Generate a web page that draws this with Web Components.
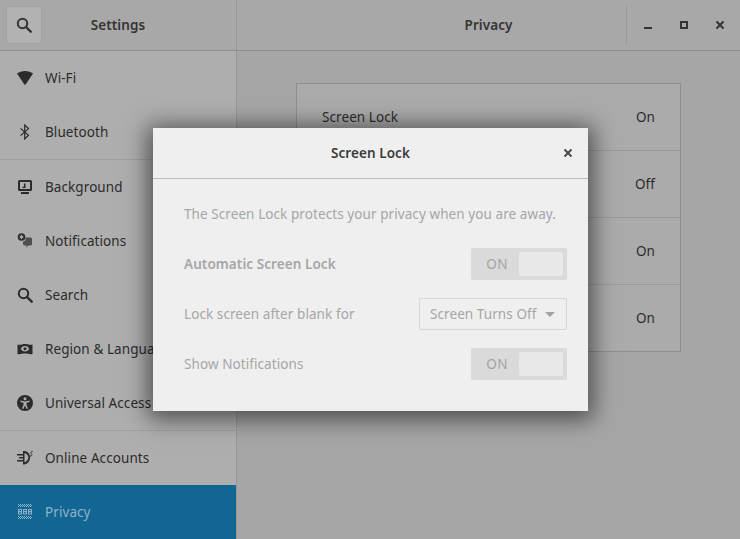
<!DOCTYPE html>
<html>
<head>
<meta charset="utf-8">
<title>Settings</title>
<style>
  html, body { margin: 0; height: 100%; overflow: hidden; }
  body { font: 13.5px "Noto Sans", "Open Sans", sans-serif; letter-spacing: .08px; color: #2e3436; }
</style>
</head>
<body>
<settings-window>
  <settings-header></settings-header>
  <settings-sidebar>
    <nav-row icon="wifi">Wi-Fi</nav-row>
    <nav-row icon="bluetooth" class="end">Bluetooth</nav-row>
    <nav-row icon="background">Background</nav-row>
    <nav-row icon="notifications">Notifications</nav-row>
    <nav-row icon="search">Search</nav-row>
    <nav-row icon="region">Region &amp; Language</nav-row>
    <nav-row icon="access" class="end">Universal Access</nav-row>
    <nav-row icon="online">Online Accounts</nav-row>
    <nav-row icon="privacy" selected>Privacy</nav-row>
  </settings-sidebar>
  <privacy-panel>
    <panel-row label="Screen Lock" value="On"></panel-row>
    <panel-row value="Off"></panel-row>
    <panel-row value="On"></panel-row>
    <panel-row value="On"></panel-row>
  </privacy-panel>
</settings-window>
<lock-dialog>
  <dialog-row><b>Automatic Screen Lock</b><lock-switch slot="control"></lock-switch></dialog-row>
  <dialog-row>Lock screen after blank for<lock-combo slot="control">Screen Turns Off</lock-combo></dialog-row>
  <dialog-row>Show Notifications<lock-switch slot="control"></lock-switch></dialog-row>
</lock-dialog>

<script>
// icons are all 16x16, drawn with the current colour
const ICONS = {
  wifi: '<path d="M0 3.600C2 1.900 5 1 8 1s6 .9 8 2.600L8.600 14.400c-.3.4-.9.4-1.200 0z" fill="currentColor"/>',
  bluetooth: '<path d="M3.500 4.400l8 6.900L7.700 15V1l3.800 3.600-8 7" fill="none" stroke="currentColor" stroke-width="1.200"/>',
  background: '<path fill-rule="evenodd" d="M2.500 1h11A1.500 1.500 0 0 1 15 2.500v8a1.500 1.500 0 0 1-1.500 1.500h-11A1.500 1.500 0 0 1 1 10.500v-8A1.500 1.500 0 0 1 2.500 1zM3 3v7h10V3zM4 13h8v2H4z" fill="currentColor"/><path d="M5 9l2-2V4.500h1.500V9z" fill="currentColor"/>',
  notifications: '<path d="M8.500 4.500h5A1.500 1.500 0 0 1 15 6v5a1.500 1.500 0 0 1-1.500 1.500H11L9.500 15V12.500h-2A2 2 0 0 1 6 11V8.500c2 0 3-2 2.500-4z" fill="currentColor" opacity=".72"/><circle cx="4.500" cy="4" r="3.800" fill="currentColor"/><path d="M4.500 1.800v4.400M2.600 2.900l3.800 2.200M6.400 2.900L2.600 5.100" stroke="#aeaeae"/>',
  search: '<circle cx="6.500" cy="6.500" r="4.700" fill="none" stroke="currentColor" stroke-width="2"/><path d="M10 10l4.700 4.700" stroke="currentColor" stroke-width="2.400" stroke-linecap="round"/>',
  region: '<path fill-rule="evenodd" d="M.5 3.500c2.500.8 4.500-.5 7.500-.5s5 1.300 7.500.5v9.500c-2.500.6-4.500-.5-7.500-.5s-5 1.100-7.500.5zM8 5c-2 0-3.500 1.300-4.200 2.700C4.500 9.200 6 10.500 8 10.500s3.500-1.300 4.200-2.800C11.500 6.300 10 5 8 5z" fill="currentColor"/><circle cx="8" cy="7.700" r="1.500" fill="currentColor"/>',
  access: '<path fill-rule="evenodd" d="M8 0a8 8 0 1 1 0 16A8 8 0 0 1 8 0zm0 2.300a1.500 1.500 0 1 0 0 3 1.500 1.500 0 0 0 0-3zM3.500 5.600v1.300l3 .8v2l-1.400 3.800 1.200.4L8 10.500l1.700 3.400 1.200-.4-1.400-3.800v-2l3-.8V5.600L8 6.500z" fill="currentColor"/>',
  online: '<path d="M6 1h1.500c3.800.6 5.500 3.400 5.500 6.500s-1.700 6.200-5.500 7H6z" fill="currentColor"/><path d="M7.500 3c2.500.6 3.800 2.500 3.800 4.500s-1.300 4-3.800 4.800z" fill="#aeaeae"/><path d="M0 4.800h6.500M0 10.700h6.500M2 7.700h4.500" stroke="currentColor" stroke-width="1.500"/><path d="M15.800 1.500c-1.800-.5-2.600 1-1.500 2.200s.6 2.800-1.300 2.300" fill="none" stroke="currentColor" stroke-width=".9"/>',
  privacy: '<g fill="none" stroke="currentColor"><path stroke-dasharray="1 1" d="M1 .5h14M2 1.500h13M1 2.500h14M1 12.500h14M2 13.500h13M1 14.500h14"/><path fill-rule="evenodd" stroke="none" fill="currentColor" d="M1 5h4v5.500H1zM2 6v1h2V6zM2 8.200v1.200h2V8.200zM6 5h4v5.500H6zM7 6v1h2V6zM7 8.200v1.200h2V8.200zM11 5h4v5.500h-4zM12 6v1h2V6zM12 8.200v1.200h2V8.200z"/></g>',
  close: '<path d="M4.500 4.500l7 7M11.500 4.500l-7 7" stroke="currentColor" stroke-width="2"/>',
  minimize: '<path d="M4 11h8" stroke="currentColor" stroke-width="2"/>',
  maximize: '<path d="M5 5h6v6H5z" fill="none" stroke="currentColor" stroke-width="2"/>'
};

function icon(name, size = 16) {
  return `<svg width="${size}" height="${size}" viewBox="0 0 16 16" aria-hidden="true">${ICONS[name]}</svg>`;
}

class Base extends HTMLElement {
  constructor() {
    super();
    this.attachShadow({ mode: 'open' });
    this.shadowRoot.innerHTML = this.markup();
  }
}

class SettingsWindow extends Base {
  markup() {
    return `<style>
      :host { display: grid; grid-template-columns: 237px 1fr; grid-template-rows: 51px 1fr;
        width: 740px; height: 539px; background: #a6a6a6; overflow: hidden; }
      ::slotted(settings-header) { grid-column: 1 / 3; }
    </style><slot></slot>`;
  }
}

class SettingsHeader extends Base {
  markup() {
    return `<style>
      :host { display: grid; grid-template-columns: 237px 1fr; height: 51px; box-sizing: border-box;
        background: #a8a8a8; border-bottom: 1px solid #8f8f8f; color: #353535; font-weight: 600; }
      .left { display: flex; align-items: center; padding-left: 6px; border-right: 1px solid #999; }
      .find { width: 36px; height: 38px; box-sizing: border-box; display: flex; align-items: center; justify-content: center;
        background: #b2b2b2; border: 1px solid #a2a2a2; border-radius: 2px; }
      .title { flex: 1; text-align: center; padding-right: 42px; }
      .right { display: flex; align-items: center; }
      .main { flex: 1; text-align: center; padding-left: 114px; }
      .controls { display: flex; align-items: center; height: 39px; width: 114px; padding-left: 3px;
        border-left: 1px solid #999; box-sizing: border-box; }
      .controls span { display: flex; width: 36px; justify-content: center; color: #333; }
    </style>
    <div class="left"><div class="find">${icon('search')}</div><div class="title">Settings</div></div>
    <div class="right"><div class="main">Privacy</div>
      <div class="controls"><span>${icon('minimize')}</span><span>${icon('maximize')}</span><span>${icon('close')}</span></div></div>`;
  }
}

class SettingsSidebar extends Base {
  markup() {
    return `<style>
      :host { display: flex; flex-direction: column; height: 488px; box-sizing: border-box; background: #aeaeae; border-right: 1px solid #999; }
    </style><slot></slot>`;
  }
}

class NavRow extends Base {
  markup() {
    return `<style>
      :host { display: flex; align-items: center; gap: 12px; height: 54px; flex: none; padding-left: 17px; box-sizing: border-box;
        color: #2b2b2b; white-space: nowrap; }
      :host([selected]) { background: #126694; color: #8fb1c6; }
      :host(.end) { height: 55px; border-bottom: 1px solid #a0a0a0; }
      svg { flex: none; display: block; }
    </style>${icon(this.getAttribute('icon'))}<slot></slot>`;
  }
}

class PrivacyPanel extends Base {
  markup() {
    return `<style>
      :host { display: block; width: 385px; height: 269px; box-sizing: border-box; margin: 32px 0 0 59px;
        border: 1px solid #8f8f8f; background: #ababab; }
    </style><slot></slot>`;
  }
}

class PanelRow extends Base {
  markup() {
    return `<style>
      :host { display: flex; align-items: center; justify-content: space-between; height: 67px; box-sizing: border-box;
        padding: 0 25px; border-bottom: 1px solid #9a9a9a; color: #2b2b2b; }
      :host(:last-child) { height: 66px; border-bottom: 0; }
    </style><span>${this.getAttribute('label') || ''}</span><span>${this.getAttribute('value')}</span>`;
  }
}

class LockDialog extends Base {
  markup() {
    return `<style>
      :host { position: absolute; left: 153px; top: 128px; width: 435px; height: 283px; box-sizing: border-box;
        background: #efefef; color: #a6a6a6; box-shadow: 0 3px 22px 5px rgba(0,0,0,.55); }
      header { display: flex; align-items: center; justify-content: center; height: 51px; box-sizing: border-box; position: relative;
        border-bottom: 1px solid #bdbdbd; color: #3b3b3b; font-weight: 600; }
      header span { position: absolute; right: 12px; top: 17px; color: #4a4a4a; display: flex; }
      .body { display: flex; flex-direction: column; padding: 25px 21px 0 31px; }
      p { margin: 0 0 24px; line-height: 20px; }
      .rows { display: flex; flex-direction: column; gap: 18px; }
    </style>
    <header>Screen Lock<span>${icon('close')}</span></header>
    <div class="body"><p>The Screen Lock protects your privacy when you are away.</p><div class="rows"><slot></slot></div></div>`;
  }
}

class DialogRow extends Base {
  markup() {
    return `<style>
      :host { display: flex; align-items: center; justify-content: space-between; height: 32px; }
      ::slotted(b) { font-weight: 600; }
    </style><div><slot></slot></div><slot name="control"></slot>`;
  }
}

class LockSwitch extends Base {
  markup() {
    return `<style>
      :host { display: flex; align-items: center; width: 96px; height: 32px; box-sizing: border-box; padding: 4px; background: #dadada; border-radius: 2px; color: #a3a3a3; }
      span { width: 44px; text-align: center; letter-spacing: .3px; }
      i { display: block; width: 44px; height: 24px; margin-left: auto; background: #e8e8e9; border-radius: 2px; }
    </style><span>ON</span><i></i>`;
  }
}

class LockCombo extends Base {
  markup() {
    return `<style>
      :host { display: flex; align-items: center; justify-content: space-between; width: 148px; height: 32px; box-sizing: border-box;
        padding: 0 11px 0 10px; background: #efefef; border: 1px solid #d6d6d6; border-radius: 2px; color: #a6a6a6; white-space: nowrap; }
      i { width: 0; height: 0; border: 5px solid transparent; border-top: 5px solid #a3a3a3; border-bottom: 0; }
    </style><slot></slot><i></i>`;
  }
}

customElements.define('settings-window', SettingsWindow);
customElements.define('settings-header', SettingsHeader);
customElements.define('settings-sidebar', SettingsSidebar);
customElements.define('nav-row', NavRow);
customElements.define('privacy-panel', PrivacyPanel);
customElements.define('panel-row', PanelRow);
customElements.define('lock-dialog', LockDialog);
customElements.define('dialog-row', DialogRow);
customElements.define('lock-switch', LockSwitch);
customElements.define('lock-combo', LockCombo);
</script>
</body>
</html>
